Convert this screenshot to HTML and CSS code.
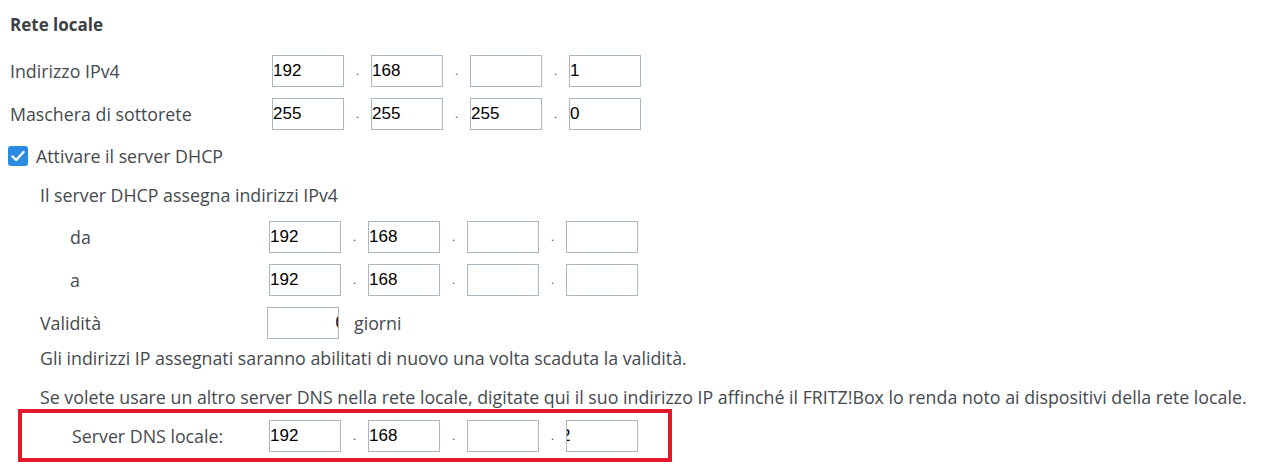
FILE: index.html
```html
<!DOCTYPE html>
<html lang="it">

<head>
    <meta charset="UTF-8">
    <meta name="viewport" content="width=device-width, initial-scale=1.0">
    <title>Rete locale</title>
    <link rel="stylesheet" href="styles.css">
</head>

<body>

    <h2 class="title">Rete locale</h2>

    <!-- indirizzo del FRITZ!Box -->
    <div class="row">
        <span class="label label-main">Indirizzo IPv4</span>
        <div class="ip">
            <span class="box">192</span><span class="dot">.</span>
            <span class="box">168</span><span class="dot">.</span>
            <span class="box"></span><span class="dot">.</span>
            <span class="box">1</span>
        </div>
    </div>

    <div class="row">
        <span class="label label-main">Maschera di sottorete</span>
        <div class="ip">
            <span class="box">255</span><span class="dot">.</span>
            <span class="box">255</span><span class="dot">.</span>
            <span class="box">255</span><span class="dot">.</span>
            <span class="box">0</span>
        </div>
    </div>

    <label class="check-row">
        <span class="checkbox">
            <svg width="14" height="12" viewBox="0 0 14 12"><path d="M1.5 6.5 L5.2 10 L12.5 2" fill="none" stroke="#fff" stroke-width="2.4" stroke-linecap="round" stroke-linejoin="round"/></svg>
        </span>
        Attivare il server DHCP
    </label>

    <div class="dhcp">
        <p class="text sub-title">Il server DHCP assegna indirizzi IPv4</p>

        <div class="row row-first">
            <span class="label label-range">da</span>
            <div class="ip">
                <span class="box">192</span><span class="dot">.</span>
                <span class="box">168</span><span class="dot">.</span>
                <span class="box"></span><span class="dot">.</span>
                <span class="box"></span>
            </div>
        </div>

        <div class="row">
            <span class="label label-range">a</span>
            <div class="ip">
                <span class="box">192</span><span class="dot">.</span>
                <span class="box">168</span><span class="dot">.</span>
                <span class="box"></span><span class="dot">.</span>
                <span class="box"></span>
            </div>
        </div>

        <div class="row">
            <span class="label label-days">Validità</span>
            <span class="box box-days"><span class="cut-right">0</span></span>
            <span class="unit">giorni</span>
        </div>

        <p class="text note note-first">Gli indirizzi IP assegnati saranno abilitati di nuovo una volta scaduta la validità.</p>
        <p class="text note">Se volete usare un altro server DNS nella rete locale, digitate qui il suo indirizzo IP affinché il FRITZ!Box lo renda noto ai dispositivi della rete locale.</p>
    </div>

    <!-- evidenziato in rosso -->
    <div class="dns">
        <span class="label label-dns">Server DNS locale:</span>
        <div class="ip">
            <span class="box">192</span><span class="dot">.</span>
            <span class="box">168</span><span class="dot">.</span>
            <span class="box"></span><span class="dot">.</span>
            <span class="box"><span class="cut-left">2</span></span>
        </div>
    </div>

</body>

</html>
```

FILE: styles.css
```css
body {
    margin: 0;
    padding: 15px 0 0 10px;
    font-family: "Source Sans Pro", "Open Sans", Lato, sans-serif;
    font-size: 17.8px;
    color: #45494e;
    background: #fff;
}

.title {
    margin: 0;
    height: 20px;
    line-height: 20px;
    font-size: 17px;
    font-weight: 700;
    color: #3c4045;
}

.row {
    display: flex;
    align-items: center;
    height: 43px;
}

.title + .row {
    margin-top: 14px;
}

.label {
    flex: none;
}

.label-main {
    width: 262px;
}

.ip {
    display: flex;
    align-items: center;
}

.box {
    display: flex;
    align-items: center;
    width: 72px;
    height: 32px;
    box-sizing: border-box;
    border: 1px solid #a9b8c2;
    font-family: "Liberation Sans", Arial, sans-serif;
    font-size: 17px;
    color: #000;
    overflow: hidden;
    background: #fff;
}

.dot {
    width: 27px;
    text-align: center;
    font-family: "Liberation Sans", Arial, sans-serif;
    font-size: 13px;
    color: #555;
}

.check-row {
    display: flex;
    align-items: center;
    gap: 8px;
    margin: 9px 0 0 -2px;
    height: 24px;
}

.checkbox {
    display: flex;
    align-items: center;
    justify-content: center;
    width: 20px;
    height: 20px;
    border-radius: 3px;
    background: #2a8ae2;
}

.dhcp {
    padding-left: 30px;
}

.text {
    margin: 0;
}

.sub-title {
    margin-top: 15px;
    height: 24px;
    line-height: 24px;
}

.row-first {
    margin-top: 8px;
}

.label-range {
    width: 199px;
    padding-left: 30px;
}

.label-days {
    width: 227px;
}

.box-days {
    justify-content: flex-end;
}

.cut-right {
    margin-right: -7px;
}

.cut-left {
    margin-left: -6px;
}

.unit {
    margin-left: 15px;
}

.note {
    margin-top: 15px;
    line-height: 24px;
}

.note-first {
    margin-top: 2px;
}

.dns {
    display: flex;
    align-items: center;
    width: 646px;
    height: 45px;
    margin-left: 8px;
    border: 4px solid #e3192b;
}

.label-dns {
    width: 197px;
    padding-left: 50px;
}
```
